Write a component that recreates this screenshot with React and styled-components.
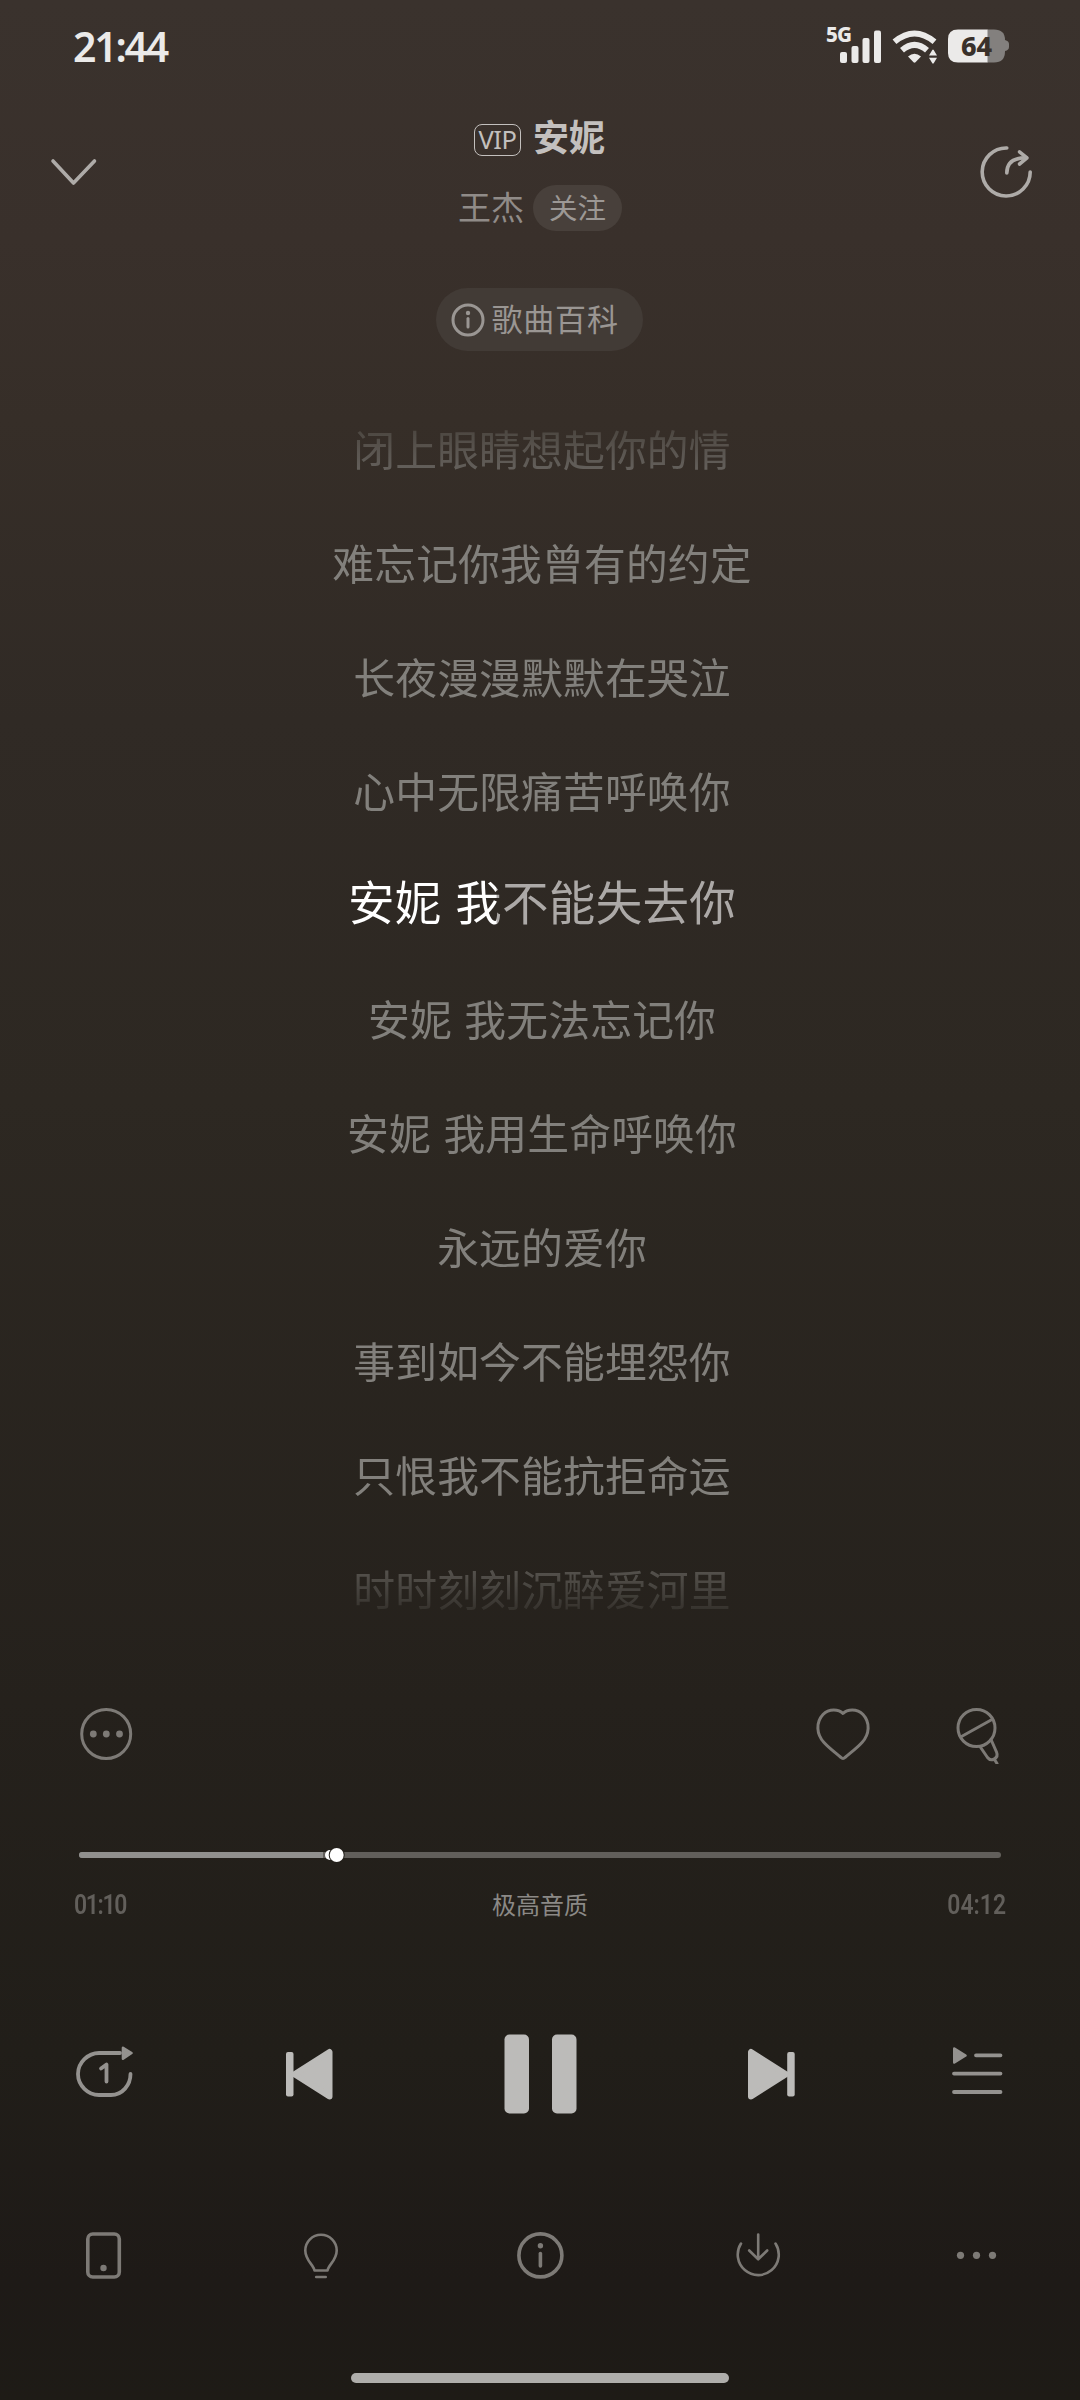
import React from "react";
import styled, { createGlobalStyle } from "styled-components";

const GlobalStyle = createGlobalStyle`
  body {
    margin: 0;
    background: #1e1b16;
  }
`;

const Screen = styled.div`
  display: flex;
  flex-direction: column;
  width: 1080px;
  height: 2400px;
  overflow: hidden;
  color: #fff;
  font-family: "Noto Sans CJK SC", "Noto Sans", sans-serif;
  background: linear-gradient(
    180deg,
    #3a322d 0,
    #39302b 240px,
    #362e28 420px,
    #302a25 720px,
    #2d2822 1100px,
    #25211c 1700px,
    #211e19 2050px,
    #1e1a17 2280px,
    #1e1b16 2400px
  );
`;

const StatusBar = styled.div`
  display: flex;
  align-items: center;
  justify-content: space-between;
  height: 92px;
  padding: 0 70px 0 73px;
  flex-shrink: 0;
`;

const Clock = styled.span`
  font-family: "Noto Sans", sans-serif;
  font-size: 41px;
  font-weight: 600;
  line-height: 60px;
  letter-spacing: -2.2px;
  padding-bottom: 1px;
  color: #ebeae9;
`;

const StatusIcons = styled.div`
  display: flex;
  align-items: center;
`;

const Header = styled.div`
  display: flex;
  justify-content: space-between;
  align-items: flex-start;
  height: 259px;
  padding: 0 44px;
  flex-shrink: 0;
`;

const Slot = styled.div`
  display: flex;
  align-items: center;
  justify-content: center;
  width: ${(props) => props.$width || 60}px;
  height: ${(props) => props.$height || 60}px;
  margin-top: ${(props) => props.$top || 0}px;
`;

const SongInfo = styled.div`
  display: flex;
  flex-direction: column;
  align-items: center;
  padding-top: 22px;
`;

const TitleRow = styled.div`
  display: flex;
  align-items: center;
  gap: 12px;
  height: 47px;
  margin-right: 1px;
`;

const VipBadge = styled.span`
  box-sizing: border-box;
  width: 47px;
  height: 32px;
  margin-top: 5px;
  border: 1.5px solid #c3c0be;
  border-radius: 8px;
  font-family: "Noto Sans", sans-serif;
  font-size: 25.5px;
  line-height: 28px;
  letter-spacing: -0.5px;
  text-align: center;
  color: #c3c0be;
`;

const Title = styled.h1`
  margin: 0;
  padding-bottom: 5px;
  font-size: 36px;
  font-weight: 700;
  line-height: 42px;
  color: #c3c0be;
`;

const ArtistRow = styled.div`
  display: flex;
  align-items: center;
  gap: 9px;
  height: 46px;
  margin-top: 24px;
`;

const Artist = styled.span`
  padding-bottom: 3px;
  font-size: 33px;
  line-height: 43px;
  color: #908b88;
`;

const FollowButton = styled.button`
  width: 89px;
  height: 46px;
  padding: 0 0 2px;
  border: 0;
  border-radius: 23px;
  font-family: inherit;
  font-size: 28.5px;
  line-height: 42px;
  color: #9c9895;
  background: #48403b;
`;

const WikiButton = styled.button`
  display: flex;
  align-items: center;
  gap: 7px;
  width: 207px;
  height: 63px;
  margin: 57px 2px 0 0;
  padding: 0 0 0 15px;
  border: 0;
  border-radius: 32px;
  font-family: inherit;
  font-size: 31px;
  line-height: 57px;
  letter-spacing: 0.8px;
  white-space: nowrap;
  color: #9a9693;
  background: #423b36;
`;

const WikiLabel = styled.span`
  padding-bottom: 5px;
`;

const Lyrics = styled.div`
  display: flex;
  flex-direction: column;
  align-items: center;
  height: 1256px;
  margin-top: 40px;
  padding-left: 4px;
  flex-shrink: 0;
  mask-image: linear-gradient(
    180deg,
    transparent 0,
    #000 128px,
    #000 1120px,
    transparent 1240px
  );
`;

const LyricLine = styled.p`
  margin: ${(props) => (props.$active ? "0 0 8px" : "0")};
  font-size: ${(props) => (props.$active ? 46.5 : 41.8)}px;
  line-height: ${(props) => (props.$active ? 106 : 114)}px;
  letter-spacing: ${(props) => (props.$active ? 0.3 : 0.15)}px;
  word-spacing: 3px;
  white-space: pre;
  color: ${(props) => (props.$active ? "#aca9a7" : "#82807c")};
`;

const Sung = styled.span`
  color: transparent;
  background: linear-gradient(90deg, #fff 96%, #aca9a7 97%);
  background-clip: text;
`;

const ActionRow = styled.div`
  display: flex;
  align-items: center;
  gap: 75px;
  height: 60px;
  margin-top: 57px;
  padding: 0 72px 0 76px;
  flex-shrink: 0;

  & > :first-child {
    margin-right: auto;
  }
`;

const Track = styled.div`
  display: flex;
  align-items: center;
  height: 6px;
  margin: 88px 79px 0;
  border-radius: 3px;
  background: #625f5b;
  flex-shrink: 0;
`;

const Played = styled.div`
  height: 6px;
  border-radius: 3px 0 0 3px;
  background: #91908e;
`;

const TimeRow = styled.div`
  display: grid;
  grid-template-columns: 1fr auto 1fr;
  align-items: center;
  height: 30px;
  margin-top: 29px;
  padding: 0 74px;
  flex-shrink: 0;
`;

const Time = styled.span`
  justify-self: ${(props) => (props.$end ? "end" : "start")};
  padding-top: 3px;
  font-family: Roboto, sans-serif;
  font-size: 27px;
  font-weight: 600;
  line-height: 30px;
  letter-spacing: ${(props) => (props.$end ? 0 : -1.6)}px;
  transform: scaleX(0.85);
  transform-origin: ${(props) => (props.$end ? "right" : "left")};
  color: #625f5b;
`;

const Quality = styled.span`
  font-size: 24px;
  line-height: 30px;
  color: #8b8986;
`;

const Controls = styled.div`
  display: flex;
  align-items: center;
  justify-content: space-between;
  height: 80px;
  margin-top: 117px;
  padding: 0 74px;
  flex-shrink: 0;
`;

const Tools = styled.div`
  display: flex;
  justify-content: space-between;
  height: 60px;
  margin-top: 111px;
  padding: 0 74px;
  flex-shrink: 0;
`;

const HomeIndicator = styled.div`
  width: 378px;
  height: 10px;
  margin: 88px auto 0;
  border-radius: 5px;
  background: #afaeab;
  flex-shrink: 0;
`;

const Icon = ({ size = 60, width, height, color = "#7d7a76", stroke = 3, children }) => (
  <svg
    width={width || size}
    height={height || size}
    viewBox={`0 0 ${width || size} ${height || size}`}
    fill="none"
    stroke={color}
    strokeWidth={stroke}
    strokeLinecap="round"
    strokeLinejoin="round"
  >
    {children}
  </svg>
);

const Signal = () => (
  <svg width="62" height="60" viewBox="0 -8 62 60" fill="#ebeae9">
    <text x="0" y="18" fontFamily="Noto Sans" fontSize="20.5" fontWeight="800" textLength="26">
      5G
    </text>
    <rect x="14" y="28" width="7" height="11" rx="2" />
    <rect x="25.5" y="22" width="7" height="17" rx="2" />
    <rect x="36.5" y="14" width="7" height="25" rx="2" />
    <rect x="48" y="6.5" width="7" height="32.5" rx="2" />
  </svg>
);

const Wifi = () => (
  <svg width="60" height="44" viewBox="2 0 60 44" fill="none" stroke="#ebeae9" strokeWidth="6">
    <path d="M8.5 17.8 Q28.5 1.2 48.5 17.8" />
    <path d="M16 26.2 Q28.5 15.4 41 26.2" />
    <path d="M22 32.5 Q28.5 27 35 32.5 L29.5 38.3 Q28.5 39.2 27.5 38.3 Z" fill="#ebeae9" stroke="none" />
    <path
      d="M43 31.5 L46.3 26 Q47 25.2 47.7 26 L51 31.5 Z M43 33.8 H51 L47.7 39.3 Q47 40 46.3 39.3 Z"
      fill="#ebeae9"
      stroke="none"
    />
  </svg>
);

const Battery = () => (
  <svg width="62" height="50" viewBox="0 -8 62 50">
    <path d="M57 11 Q61 12 61 15 V18 Q61 21 57 22 Z" fill="#83807e" />
    <path d="M39 0.5 H46 Q57 0.5 57 11 V22.5 Q57 33.5 46 33.5 H39 Z" fill="#83807e" />
    <path d="M39.5 0.5 H10 Q0 0.5 0 10 V24 Q0 33.5 10 33.5 H39.5 Z" fill="#ebeae9" />
    <text x="13" y="26.5" fontFamily="Noto Sans" fontSize="27" fontWeight="800" fill="#39312b" textLength="31">
      64
    </text>
  </svg>
);

const lyrics = [
  "闭上眼睛想起你的情",
  "难忘记你我曾有的约定",
  "长夜漫漫默默在哭泣",
  "心中无限痛苦呼唤你",
  { sung: "安妮 我", rest: "不能失去你" },
  "安妮 我无法忘记你",
  "安妮 我用生命呼唤你",
  "永远的爱你",
  "事到如今不能埋怨你",
  "只恨我不能抗拒命运",
  "时时刻刻沉醉爱河里",
];

const Progress = ({ value }) => (
  <Track>
    <Played style={{ width: `${value * 100}%` }} />
    <Icon width={22} height={16} stroke={0}>
      <circle cx="7" cy="8" r="5" fill="#fff" />
      <circle cx="13.7" cy="8" r="8" fill="#24201b" />
      <circle cx="13.7" cy="8" r="7" fill="#fff" />
    </Icon>
  </Track>
);

const App = () => {
  return (
    <>
      <GlobalStyle />
      <Screen>
        <StatusBar>
          <Clock>21:44</Clock>
          <StatusIcons>
            <Signal />
            <Wifi />
            <Battery />
          </StatusIcons>
        </StatusBar>

        <Header>
          <Slot $top={50}>
            <Icon color="#aeaba8" stroke={3.6}>
              <path d="M9 19 L29.5 41 L50.5 19" />
            </Icon>
          </Slot>
          <SongInfo>
            <TitleRow>
              <VipBadge>VIP</VipBadge>
              <Title>安妮</Title>
            </TitleRow>
            <ArtistRow>
              <Artist>王杰</Artist>
              <FollowButton>关注</FollowButton>
            </ArtistRow>
            <WikiButton>
              <Icon size={34} color="#9a9693">
                <circle cx="17" cy="17" r="15" />
                <path d="M17 15.5 V24" />
                <circle cx="17" cy="10" r="2.2" fill="#9a9693" stroke="none" />
              </Icon>
              <WikiLabel>歌曲百科</WikiLabel>
            </WikiButton>
          </SongInfo>
          <Slot $top={50}>
            <Icon color="#aeaba8" stroke={3.6}>
              <path d="M30.8 6 A24 24 0 1 0 54.2 30" />
              <path d="M30.8 31 C30.8 21 37 15.8 50 15.8" />
              <path d="M43.5 9.8 L51 15.8 L43.5 22" />
            </Icon>
          </Slot>
        </Header>

        <Lyrics>
          {lyrics.map((line, i) =>
            line.sung ? (
              <LyricLine key={i} $active>
                <Sung>{line.sung}</Sung>
                {line.rest}
              </LyricLine>
            ) : (
              <LyricLine key={i}>{line}</LyricLine>
            )
          )}
        </Lyrics>

        <ActionRow>
          <Slot>
            <Icon>
              <circle cx="30.2" cy="30" r="24.5" />
              <g fill="#7d7a76" stroke="none">
                <circle cx="17.3" cy="30" r="3.4" />
                <circle cx="30.3" cy="30" r="3.4" />
                <circle cx="43.5" cy="30" r="3.4" />
              </g>
            </Icon>
          </Slot>
          <Slot>
            <Icon>
              <path d="M30 9.5 C34 5 44 4 50 10.5 C57.5 18.5 56.5 30.5 49 38.5 C44 44 38.5 48 32 53.5 Q30 55.5 28 53.5 C21.5 48 16 44 11 38.5 C3.5 30.5 2.5 18.5 10 10.5 C16 4 26 5 30 9.5 Z" />
            </Icon>
          </Slot>
          <Slot>
            <Icon>
              <circle cx="28.5" cy="24" r="18.5" />
              <path d="M13.5 32.5 L44 15.5" />
              <path d="M32 42.5 L39.5 53.5 C43.5 58.5 51 54 48.5 48 L43 35.5" />
              <path d="M46.5 55.5 L49 59.5" />
            </Icon>
          </Slot>
        </ActionRow>

        <Progress value={0.2648} />

        <TimeRow>
          <Time>01:10</Time>
          <Quality>极高音质</Quality>
          <Time $end>04:12</Time>
        </TimeRow>

        <Controls>
          <Slot>
            <Icon color="#94928f" stroke={3.8}>
              <path d="M46 9 H25 C14 9 4 18.5 4 30 C4 41.5 14 51 25 51 H37 C48.5 51 56.5 41 56.5 30" />
              <path d="M49 3.8 L57.5 9 L49 14.7 Z" fill="#94928f" strokeWidth="2.6" />
              <path d="M27 24.5 L32.5 20.5 V37.5" />
            </Icon>
          </Slot>
          <Slot>
            <Icon color="#bcbbb9">
              <rect x="7" y="8" width="7.5" height="44.5" rx="2" fill="#bcbbb9" stroke="none" />
              <path d="M15.5 30.2 L50.5 8 V52.5 Z" fill="#bcbbb9" strokeWidth="6" />
            </Icon>
          </Slot>
          <Slot $width={112} $height={80}>
            <Icon width={112} height={80}>
              <rect x="20.5" y="0.5" width="24.5" height="79" rx="5" fill="#bcbbb9" stroke="none" />
              <rect x="68" y="0.5" width="24.5" height="79" rx="5" fill="#bcbbb9" stroke="none" />
            </Icon>
          </Slot>
          <Slot>
            <Icon color="#bcbbb9">
              <rect x="46.2" y="8" width="7.5" height="44.5" rx="2" fill="#bcbbb9" stroke="none" />
              <path d="M45 30.2 L10 8 V52.5 Z" fill="#bcbbb9" strokeWidth="6" />
            </Icon>
          </Slot>
          <Slot>
            <Icon color="#94928f" stroke={3.8}>
              <path d="M8.3 4.5 L19.5 11.5 L8.3 18.5 Z" fill="#94928f" strokeWidth="2.6" />
              <path d="M30 11.3 H54.5 M8 29.6 H54.5 M8 48 H54.5" />
            </Icon>
          </Slot>
        </Controls>

        <Tools>
          <Slot>
            <Icon stroke={3.6}>
              <rect x="13.8" y="9" width="31.5" height="43" rx="5" />
              <circle cx="29.5" cy="43" r="3.2" fill="#7d7a76" stroke="none" />
            </Icon>
          </Slot>
          <Slot>
            <Icon stroke={2.6}>
              <path d="M22.5 45.5 C21.5 39.5 13.3 35.5 13.3 25.5 A15.7 15.7 0 0 1 44.7 25.5 C44.7 35.5 36.5 39.5 35.5 45.5 Z" />
              <path d="M24.2 52 H33.7" />
            </Icon>
          </Slot>
          <Slot>
            <Icon stroke={3.6}>
              <circle cx="30.4" cy="30.4" r="21.5" />
              <path d="M30.4 28.5 V41" />
              <circle cx="30.4" cy="20.7" r="2.7" fill="#7d7a76" stroke="none" />
            </Icon>
          </Slot>
          <Slot>
            <Icon stroke={2.6}>
              <path d="M13 18.5 A20.5 20.5 0 1 0 47.5 18.5" />
              <path d="M30.2 9.5 V34 M21.2 25.5 L30.2 34.3 L39.2 25.5" />
            </Icon>
          </Slot>
          <Slot>
            <Icon>
              <g fill="#7d7a76" stroke="none">
                <circle cx="14.5" cy="30.3" r="3.6" />
                <circle cx="30.5" cy="30.3" r="3.6" />
                <circle cx="46.5" cy="30.3" r="3.6" />
              </g>
            </Icon>
          </Slot>
        </Tools>

        <HomeIndicator />
      </Screen>
    </>
  );
};

export default App;
